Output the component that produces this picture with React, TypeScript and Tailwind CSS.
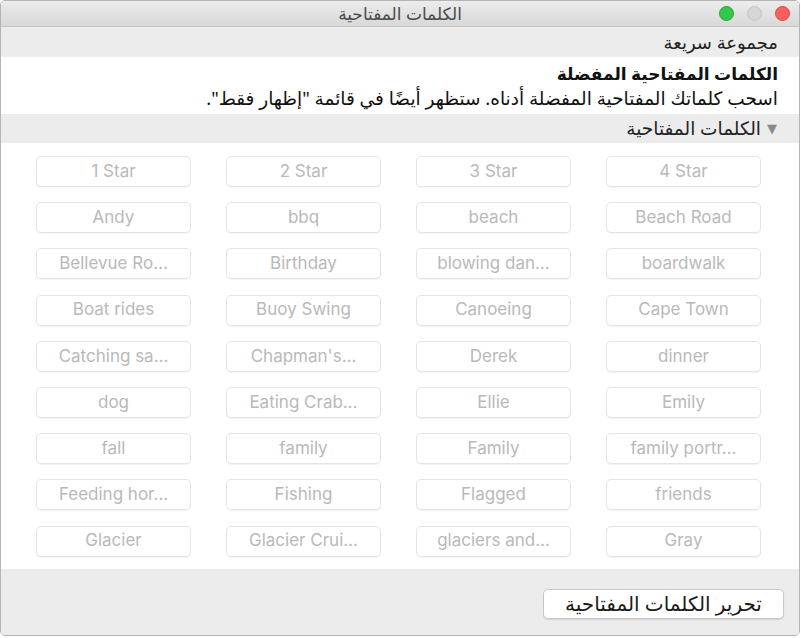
import React from 'react';

const keywords = [
  '1 Star', '2 Star', '3 Star', '4 Star',
  'Andy', 'bbq', 'beach', 'Beach Road',
  'Bellevue Ro…', 'Birthday', 'blowing dan…', 'boardwalk',
  'Boat rides', 'Buoy Swing', 'Canoeing', 'Cape Town',
  'Catching sa…', "Chapman's…", 'Derek', 'dinner',
  'dog', 'Eating Crab…', 'Ellie', 'Emily',
  'fall', 'family', 'Family', 'family portr…',
  'Feeding hor…', 'Fishing', 'Flagged', 'friends',
  'Glacier', 'Glacier Crui…', 'glaciers and…', 'Gray',
];

const arabic = { fontFamily: '"Noto Sans", "DejaVu Sans", sans-serif' };

export default function App() {
  return (
    <div className="w-[801px] h-[638px] bg-white">
      <div
        dir="rtl"
        className="w-[800px] h-[636px] flex flex-col border border-[#b4b4b4] rounded-[5px] overflow-hidden bg-white"
        style={arabic}
      >
        {/* Title bar */}
        <div className="relative h-[26px] shrink-0 flex items-center justify-center bg-gradient-to-b from-[#ececec] to-[#d8d8d8] border-b border-[#c4c4c4]">
          <span className="text-[17px] leading-none text-[#4a4a4a]">الكلمات المفتاحية</span>
          <div className="absolute right-[9px] top-[5px] flex gap-[13px]">
            <span className="w-[15px] h-[15px] rounded-full bg-[#fc605c] border border-[#e0443e]" />
            <span className="w-[15px] h-[15px] rounded-full bg-[#d6d6d6] border border-[#c6c6c6]" />
            <span className="w-[15px] h-[15px] rounded-full bg-[#34c84a] border border-[#24a732]" />
          </div>
        </div>

        {/* Quick group */}
        <div className="h-[30px] shrink-0 flex items-center bg-[#ececec] pr-[21px]">
          <span className="text-[18px] leading-none text-[#222]">مجموعة سريعة</span>
        </div>

        <div className="h-[57px] shrink-0 flex flex-col justify-center pr-[21px] pt-[1px] leading-[24px]">
          <span className="text-[17px] font-bold text-[#111]">الكلمات المفتاحية المفضلة</span>
          <span className="text-[18.5px] text-[#111]">
            اسحب كلماتك المفتاحية المفضلة أدناه. ستظهر أيضًا في قائمة "إظهار فقط".
          </span>
        </div>

        {/* Keywords header */}
        <div className="h-[29px] shrink-0 flex items-center gap-[6px] bg-[#ececec] pr-[22px]">
          <span className="text-[13px] text-[#8a8a8a] leading-none">▼</span>
          <span className="text-[18.5px] leading-none text-[#222]">الكلمات المفتاحية</span>
        </div>

        {/* Keyword grid */}
        <div
          dir="ltr"
          className="h-[426px] shrink-0 grid grid-cols-[repeat(4,155px)] gap-x-[35px] gap-y-[15.2px] content-start pl-[35px] pt-[13px]"
        >
          {keywords.map((k) => (
            <div
              key={k}
              className="h-[31px] flex items-center justify-center rounded-[5px] border border-[#e4e4e4] shadow-[0_1px_1px_rgba(0,0,0,0.05)] text-[17px] text-[#b9b9b9] font-['Inter',sans-serif]"
            >
              {k}
            </div>
          ))}
        </div>

        {/* Bottom bar */}
        <div className="flex-1 bg-[#ececec] pr-[15px] pt-[20px]">
          <button className="w-[241px] h-[30px] flex items-center justify-center rounded-[5px] bg-white border border-[#c8c8c8] shadow-[0_1px_1px_rgba(0,0,0,0.12)] text-[20px] leading-none text-[#1a1a1a]">
            تحرير الكلمات المفتاحية
          </button>
        </div>
      </div>
    </div>
  );
}
